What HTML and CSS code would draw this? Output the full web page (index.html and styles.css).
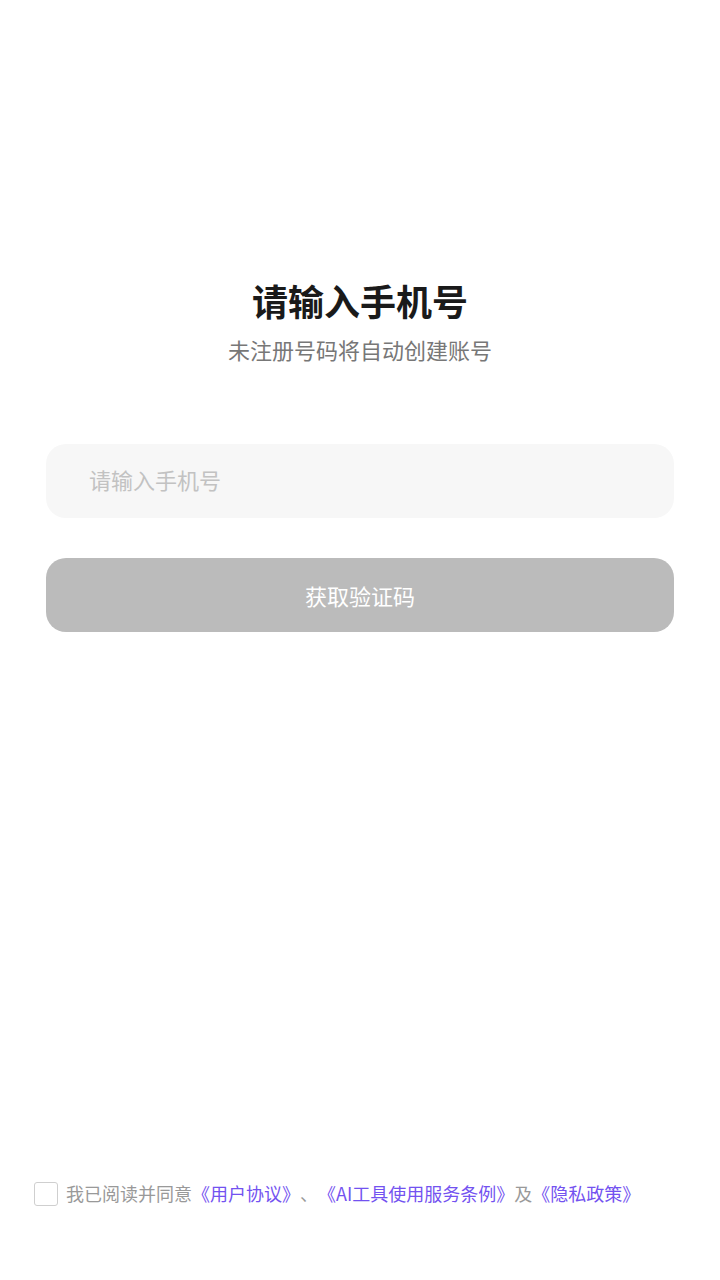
FILE: index.html
```html
<!DOCTYPE html>
<html lang="zh-CN">
<head>
<meta charset="utf-8">
<title>登录</title>
<link rel="stylesheet" href="styles.css">
</head>
<body>
<main class="page">
  <section class="head">
    <h1 class="title">请输入手机号</h1>
    <p class="subtitle">未注册号码将自动创建账号</p>
  </section>
  <section class="form">
    <div class="field"><input class="input" type="tel" placeholder="请输入手机号"></div>
    <button class="btn" type="button">获取验证码</button>
  </section>
  <footer class="agree">
    <span class="check"></span>
    <span class="agree-text">我已阅读并同意<a class="link">《用户协议》</a>、<a class="link">《AI工具使用服务条例》</a>及<a class="link">《隐私政策》</a></span>
  </footer>
</main>
</body>
</html>
```

FILE: styles.css
```css
* { box-sizing: border-box; }
html, body { margin: 0; padding: 0; background: #ffffff; }
body {
  font-family: "Noto Sans CJK SC", "Noto Sans", sans-serif;
  text-spacing-trim: space-all;
}
.page {
  height: 1280px;
  display: flex;
  flex-direction: column;
  padding: 275px 46px 74px;
}
.head { text-align: center; }
.title {
  margin: 0;
  font-size: 36px;
  line-height: 50px;
  font-weight: 700;
  color: #1a1a1a;
}
.subtitle {
  margin: 8px 0 0;
  font-size: 22px;
  line-height: 32px;
  color: #777777;
}
.form {
  margin-top: 79px;
  display: flex;
  flex-direction: column;
  gap: 40px;
}
.field {
  height: 74px;
  border-radius: 20px;
  background: #f7f7f7;
  display: flex;
  align-items: center;
  padding: 0 43px;
}
.input {
  width: 100%;
  border: 0;
  outline: 0;
  background: transparent;
  font-family: inherit;
  font-size: 22px;
  line-height: 30px;
  height: 30px;
  margin-top: -4px;
  color: #333;
  padding: 0;
}
.input::placeholder { color: #c2c2c2; }
.btn {
  height: 74px;
  border: 0;
  border-radius: 20px;
  background: #bbbbbb;
  color: #ffffff;
  font-family: inherit;
  font-size: 22px;
  padding: 0;
}
.agree {
  margin-top: auto;
  margin-left: -12px;
  display: flex;
  align-items: center;
  gap: 8px;
  height: 24px;
}
.check {
  width: 24px;
  height: 24px;
  border: 1px solid #cfcfcf;
  border-radius: 3px;
  background: #fff;
  flex: none;
}
.agree-text {
  font-size: 18px;
  line-height: 24px;
  margin-top: -2px;
  color: #999999;
  white-space: nowrap;
  text-spacing-trim: space-all;
  font-feature-settings: "halt" 0, "chws" 0;
}
.link { color: #7352f0; }
```
